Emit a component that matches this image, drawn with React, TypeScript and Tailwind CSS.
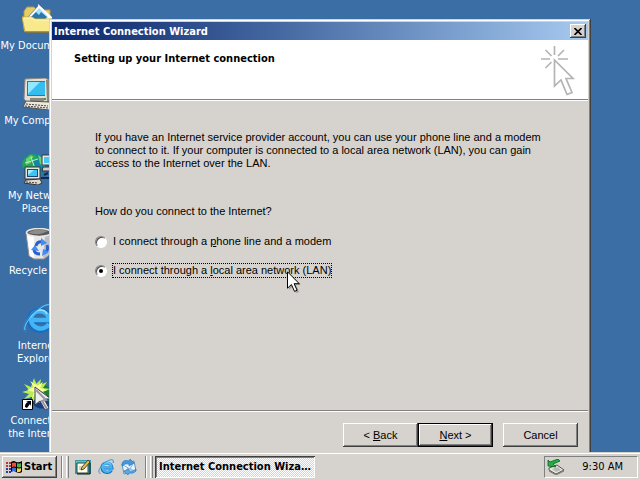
import type { ReactNode } from 'react';

const raised =
  'shadow-[inset_-1px_-1px_#404040,inset_1px_1px_#ffffff,inset_-2px_-2px_#808080]';
const radio =
  "relative size-3 shrink-0 appearance-none rounded-full border border-t-[#808080] border-l-[#808080] border-r-white border-b-white bg-white shadow-[inset_1px_1px_#505050] checked:after:absolute checked:after:left-[3px] checked:after:top-[3px] checked:after:size-1 checked:after:rounded-full checked:after:bg-black checked:after:content-['']";

export default function App() {
  return (
    <div className="flex h-screen flex-col overflow-hidden bg-[#3a6ea5] font-['Liberation_Sans',sans-serif] text-[11px] leading-[13px] text-black">
      <main className="relative min-h-0 flex-1 overflow-hidden">
        <nav className="flex w-[75px] flex-col pt-[3px] font-['DejaVu_Sans_Condensed','DejaVu_Sans',sans-serif] text-white">
          <DesktopIcon icon={<DocumentsIcon />} label="My Documents" />
          <DesktopIcon icon={<ComputerIcon />} label="My Computer" />
          <DesktopIcon icon={<NetworkIcon />} label={'My Network\nPlaces'} />
          <DesktopIcon icon={<RecycleIcon />} label="Recycle Bin" />
          <DesktopIcon icon={<ExplorerIcon className="size-8" />} label={'Internet\nExplorer'} />
          <DesktopIcon icon={<ConnectIcon />} label={'Connect to\nthe Internet'} />
        </nav>
        <WizardWindow />
      </main>
      <Taskbar />
    </div>
  );
}

function DesktopIcon({ icon, label }: { icon: ReactNode; label: string }) {
  return (
    <button className="flex h-[75px] w-full flex-col items-center gap-1">
      {icon}
      <span className="whitespace-pre-line text-center">{label}</span>
    </button>
  );
}

function WizardWindow() {
  return (
    <section className="absolute -bottom-2 left-[49px] right-[49px] top-[19px] flex flex-col bg-[#d6d3ce] p-[3px] shadow-[inset_-1px_-1px_#404040,inset_1px_1px_#d6d3ce,inset_-2px_-2px_#808080,inset_2px_2px_#ffffff]">
      <header className="flex h-[18px] items-center justify-between bg-linear-to-r from-[#0a246a] to-[#a6caf0] px-0.5">
        <h1 className="font-['DejaVu_Sans_Condensed','DejaVu_Sans',sans-serif] font-bold text-white">
          Internet Connection Wizard
        </h1>
        <button
          aria-label="Close"
          className={`flex h-[14px] w-4 items-center justify-center bg-[#d6d3ce] ${raised}`}
        >
          <svg viewBox="0 0 8 7" className="h-[7px] w-2" stroke="#000" strokeWidth="1.6">
            <path d="M.5 0 7.5 7M7.5 0 .5 7" />
          </svg>
        </button>
      </header>

      <div className="flex h-[60px] items-start justify-between border-b border-[#808080] bg-white pl-[22px] pr-3">
        <h2 className="pt-3 font-['DejaVu_Sans_Condensed','DejaVu_Sans',sans-serif] font-bold">
          Setting up your Internet connection
        </h2>
        <WizardLogo />
      </div>

      <form className="flex min-h-0 flex-1 flex-col border-t border-white" onSubmit={(e) => e.preventDefault()}>
        <div className="flex-1 px-[43px] pt-[30px]">
          <p className="max-w-[450px]">
            If you have an Internet service provider account, you can use your phone line and a modem
            to connect to it. If your computer is connected to a local area network (LAN), you can gain
            access to the Internet over the LAN.
          </p>
          <fieldset className="flex flex-col items-start">
            <legend className="pt-[35px] pb-4">How do you connect to the Internet?</legend>
            <label className="mb-3.5 flex items-center gap-[5px]">
              <input type="radio" name="connection" className={radio} />
              <span className="border border-transparent">
                I connect through a <u>p</u>hone line and a modem
              </span>
            </label>
            <label className="relative flex items-center gap-[5px]">
              <input type="radio" name="connection" defaultChecked className={radio} />
              <span className="border border-dotted border-black">
                I connect through a <u>l</u>ocal area network (LAN)
              </span>
              <Pointer />
            </label>
          </fieldset>
        </div>

        <footer className="flex justify-end border-t border-[#808080] pb-[10px] pr-2.5 pt-3 shadow-[inset_0_1px_#ffffff]">
          <button className={`h-6 w-[75px] ${raised}`}>
            &lt; <u>B</u>ack
          </button>
          <button className="h-6 w-[75px] border border-black shadow-[inset_-1px_-1px_#404040,inset_1px_1px_#ffffff,inset_-2px_-2px_#808080]">
            <u>N</u>ext &gt;
          </button>
          <button className={`ml-2.5 h-6 w-[75px] ${raised}`}>Cancel</button>
        </footer>
      </form>
    </section>
  );
}

function Taskbar() {
  return (
    <footer className="relative flex h-7 shrink-0 items-center border-t border-[#d6d3ce] bg-[#d6d3ce] px-0.5 font-['DejaVu_Sans_Condensed','DejaVu_Sans',sans-serif] shadow-[inset_0_1px_#ffffff]">
      <button className={`flex h-[22px] w-[55px] items-center gap-0.5 pl-1 font-bold ${raised}`}>
        <WindowsLogo />
        Start
      </button>
      <Grip />
      <div className="ml-1.5 flex items-center gap-[7px]">
        <button aria-label="Show Desktop"><ShowDesktopIcon /></button>
        <button aria-label="Internet Explorer"><ExplorerIcon className="size-4" /></button>
        <button aria-label="Outlook Express"><OutlookIcon /></button>
      </div>
      <span className="ml-1 flex">
        <Grip />
      </span>
      <button className="ml-0.5 h-[22px] w-40 truncate bg-[repeating-conic-gradient(#ffffff_0_25%,#d6d3ce_0_50%)] bg-[length:2px_2px] px-1 text-left font-bold shadow-[inset_1px_1px_#404040,inset_-1px_-1px_#ffffff,inset_2px_2px_#808080]">
        Internet Connection Wizard
      </button>
      <div className="ml-auto flex h-[22px] w-[94px] items-center justify-between border border-[#808080] border-b-white border-r-white pl-0.5 pr-3.5">
        <TrayIcon />
        <time>9:30 AM</time>
      </div>
    </footer>
  );
}

function Grip() {
  return (
    <span className="ml-1 flex h-[22px] gap-[3px]">
      <span className="w-0.5 border-l border-[#808080] bg-white" />
      <span className="w-[3px] border-l border-r border-l-white border-r-[#808080]" />
    </span>
  );
}

/* icons */

function Pointer() {
  return (
    <svg viewBox="0 0 14 22" className="pointer-events-none absolute left-[192px] top-2 h-[22px] w-[14px]">
      <path d="M2 3v16l4-4 3 7 3-1-3-7h5z" fill="#000" opacity=".25" />
      <path d="M.5.8v16.4l3.9-3.7 3.1 6.9 2.6-1.2-3-6.5h5.2z" fill="#fff" stroke="#000" />
    </svg>
  );
}

function WizardLogo() {
  return (
    <svg viewBox="0 0 36 52" className="mt-1.5 h-[52px] w-9" fill="none" stroke="#b4b4b4" strokeWidth="1.7">
      <path d="M14.500 0v9M1 13h9M18 13h10M5.500 4l6 6M24 4l-6 6M5.500 22l6-6" />
      <path d="M14.500 14v26l6.500-6 6 14.500 5-2-6-14h7z" />
    </svg>
  );
}

function DocumentsIcon() {
  return (
    <svg viewBox="0 0 32 32" className="size-8 shrink-0">
      <path d="M2 8 5 4h7l3 3h13v20H2z" fill="#e5cd68" stroke="#b59a3c" />
      <path d="m5 15 12-13 13 13-12 13z" fill="#fff" stroke="#778ca5" />
      <path d="m9 14 8-9 9 9-8 8z" fill="#a7dff5" />
      <path d="m9 14 5-5 3 3 2-3 6 5-7 7z" fill="#2779ae" />
      <path d="m16 1 14 13v2L16 3z" fill="#fff" />
      <path d="M0 14h10l3 2h17l-2 13H3z" fill="#f8e98c" stroke="#d0ad3d" />
      <path d="M2 15h8l3 2h14" fill="none" stroke="#fffbc8" />
      <path d="M3 29h25l2-13" fill="none" stroke="#765e22" />
    </svg>
  );
}

function ComputerIcon() {
  return (
    <svg viewBox="0 0 32 32" className="size-8 shrink-0">
      <path d="m3 1 20-1 4 2v19l-3 3H5l-3-3z" fill="#e4e0d4" stroke="#8b8880" />
      <path d="M24 2h4v20l-3 2z" fill="#8a8680" />
      <path d="M5 3h18v15H5z" fill="#386fa8" />
      <path d="M6 4h17v13H6z" fill="#36bdef" />
      <path d="M6 4h12L6 16z" fill="#92e9ff" />
      <path d="M8 20h14v3H8z" fill="#8a877f" />
      <path d="m4 23 24 1 2 6-3 2-26-3z" fill="#eee9db" stroke="#55514c" />
      <path d="m4 26 22 2M3 28l23 2" stroke="#474747" strokeDasharray="2 1" />
      <path d="M22 21h2" stroke="#3a9b42" strokeWidth="2" />
    </svg>
  );
}

function NetworkIcon() {
  return (
    <svg viewBox="0 0 32 32" className="size-8 shrink-0">
      <circle cx="12" cy="12" r="12" fill="#1687a0" />
      <path d="M2 6 8 1l6 1 2 4-5 2 2 4-4 4-8-1-1-5z" fill="#26a25a" />
      <path d="m4 6 5-4 3 2-4 3 1 3-5 2zM16 2l6 4 1 8-5-3z" fill="#70d069" />
      <path d="m9 4 3 9M3 10l13-4" stroke="#b2efdc" />
      <path d="M20 2h12v10H20z" fill="#eee7d5" stroke="#273a54" />
      <path d="M22 4h10v6H22z" fill="#42c9f5" />
      <path d="M21 14h10l1 4H20z" fill="#d4d0c8" stroke="#253044" />
      <path d="M3 14h15v12H3z" fill="#ebe6d7" stroke="#343942" />
      <path d="M5 16h11v8H5z" fill="#1c4678" />
      <path d="M6 17h9v6H6z" fill="#39c5f5" />
      <path d="M6 17h6l-6 5z" fill="#a0efff" />
      <path d="m4 27 14-1 2 4-4 2-14-2z" fill="#e0dbce" stroke="#333" />
      <path d="m4 29 12 1" stroke="#444" strokeDasharray="2 1" />
      <path d="M19 25h13M22 22l4-2" stroke="#14284d" strokeWidth="2" />
    </svg>
  );
}

function RecycleIcon() {
  return (
    <svg viewBox="0 0 32 32" className="size-8 shrink-0">
      <path d="m4 5 3 23 5 3h10l5-4 2-22z" fill="#e8e7e6" stroke="#8d8d91" />
      <path d="m5 7 3 21 4 2V8z" fill="#fff" />
      <path d="m23 7 5-2-2 22-5 4z" fill="#bcbec5" />
      <ellipse cx="17" cy="4.500" rx="12.500" ry="4" fill="#585858" stroke="#e8e8e8" strokeWidth="1.500" />
      <path d="M6 5q8-6 20-2Q18 8 6 5" fill="#8e8c86" />
      <g fill="none" stroke="#2861cf" strokeWidth="3">
        <path d="M14 18q1-5 7-4M25 17q2 6-3 8M18 26q-6 0-6-5" />
      </g>
      <path d="m19 10 6 5-6 3zm8 14-7 4 1-7zM9 22l4-5 4 6z" fill="#438cf0" />
    </svg>
  );
}

function ExplorerIcon({ className }: { className: string }) {
  return (
    <svg viewBox="0 0 32 32" className={`${className} shrink-0`} fill="none">
      <path d="M27 22c-5 8-19 6-19-5C8 5 27 4 28 18H11" stroke="#176dc0" strokeWidth="6" />
      <path d="M27 21c-5 8-18 5-18-5C10 6 26 5 27 17H11" stroke="#43b5f4" strokeWidth="4.500" />
      <path d="M9 14C11 6 22 5 25 11" stroke="#9be3ff" strokeWidth="1.500" />
      <path d="M5 29C-4 27 7 10 19 4c8-4 14-4 11 4" stroke="#2380cc" strokeWidth="1.800" />
      <path d="M3 27C1 22 10 11 20 4c5-3 9-3 10-1" stroke="#73cfff" strokeWidth="1" />
    </svg>
  );
}

function ConnectIcon() {
  return (
    <svg viewBox="0 0 32 32" className="size-8 shrink-0">
      <circle cx="20" cy="19" r="11.500" fill="#163f83" />
      <path d="m18 6 9 3 5 9-4 6-6-4-4-8z" fill="#237b37" />
      <path d="m12 0 2 6 5-5-1 6 7-3-4 6 7 1-7 3 5 5-7-1-1 7-4-5-5 6 1-7-8 2 5-5-7-2 7-2-5-6 7 3z" fill="#b5ef51" />
      <path d="m13 2 2 6 6-4-3 6 7 2-7 2 2 7-6-5-4 4 2-6-7-2 7-3-4-6 6 4z" fill="#ffff9c" />
      <path d="M13 9v18l5-4 5 9 4-2-5-9h7z" fill="#f0eee9" stroke="#343d59" />
      <path d="m14 12 10 10-4 1 5 8" fill="none" stroke="#9896a4" strokeWidth="2" />
      <path d="M.500 21.500h10v10H.500z" fill="#fff" stroke="#000" />
      <path d="M3 29c0-3 1-4 3-5l-2-1h5v5l-1-2-3 4z" fill="#000" />
    </svg>
  );
}

function WindowsLogo() {
  return (
    <svg viewBox="0 0 16 16" className="size-4 shrink-0">
      <path d="M5 3q3-2 5 0 3 1 6-1v11q-3 2-6 0-3-2-5 0z" fill="#000" />
      <path d="M6 4q2-1 4 0v4q-2-1-4 0z" fill="#ed4c35" />
      <path d="M11 4q2 1 4 0v4q-2 1-4 0z" fill="#49b74d" />
      <path d="M6 9q2-1 4 0v4q-2-2-4 0z" fill="#386de0" />
      <path d="M11 9q2 1 4 0v3q-2 2-4 1z" fill="#f3d83f" />
      <path d="M0 4h2m1 0h2M0 7h2m1 0h2" stroke="#c33232" strokeWidth="2" />
      <path d="M0 10h2m1 0h2M0 13h2m1 0h2" stroke="#263ea4" strokeWidth="2" />
    </svg>
  );
}

function ShowDesktopIcon() {
  return (
    <svg viewBox="0 0 16 16" className="size-4">
      <path d="M0 1h16v14H0z" fill="#3a9aa4" />
      <path d="M1 2h14v2H1z" fill="#5cc3c4" />
      <path d="M2 4h11v10H2z" fill="#fffbe4" stroke="#264f50" />
      <path d="M4 8h5M4 10h3" stroke="#aba99f" />
      <path d="m6 11 1-3 6-7 2 2-6 7z" fill="#e6b752" stroke="#352b21" strokeWidth=".8" />
      <path d="M15 4v11H2" fill="none" stroke="#111" />
    </svg>
  );
}

function OutlookIcon() {
  return (
    <svg viewBox="0 0 16 16" className="size-4">
      <path d="m1 5 12-3 2 10-12 3z" fill="#e9f6ff" stroke="#5792c4" />
      <path d="m2 6 7 4 4-7M3 14l4-5m2 1 5 2" fill="none" stroke="#81add1" />
      <path d="M1 5q1-5 7-3l1-2 4 4-5 3V5Q4 4 1 7z" fill="#4298e2" stroke="#246bb4" strokeWidth=".6" />
      <path d="M15 10q0 5-7 4l-1 2-4-4 5-2v2q4 1 7-2z" fill="#55aaf0" stroke="#246bb4" strokeWidth=".6" />
    </svg>
  );
}

function TrayIcon() {
  return (
    <svg viewBox="0 0 18 16" className="h-4 w-[18px]">
      <path d="m2 9 8-3 7 5-8 4-7-4z" fill="#e9e8e0" stroke="#54534f" />
      <path d="m5 10 6-2 3 3-5 2z" fill="#b7bab2" />
      <path d="m2 12 7 4 8-4" fill="none" stroke="#777" />
      <path d="M1 7V1l2 2 8-3 2 2-7 3 3 3z" fill="#23b143" stroke="#075e1c" strokeWidth=".8" />
    </svg>
  );
}
